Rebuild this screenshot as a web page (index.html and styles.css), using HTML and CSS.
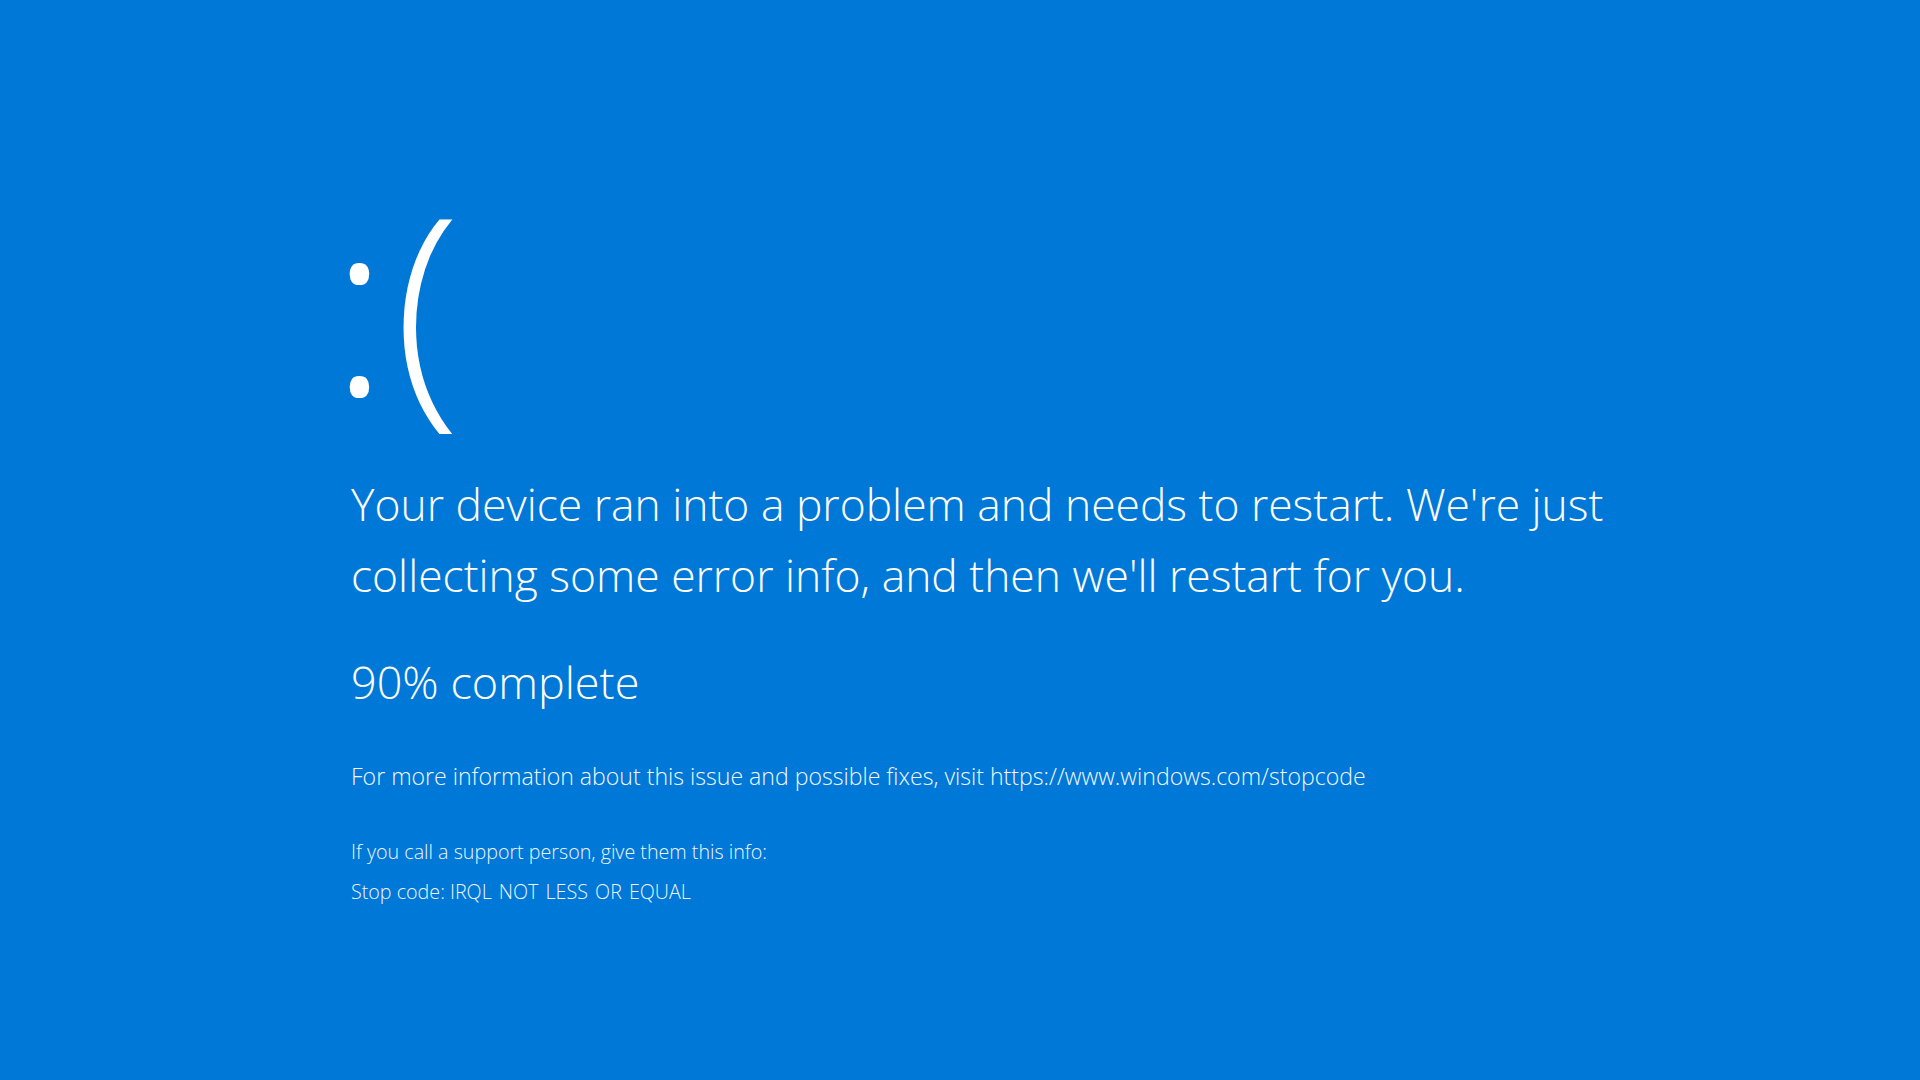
FILE: index.html
```html
<!DOCTYPE html>
<html lang="en">
<head>
<meta charset="utf-8">
<title>Blue screen</title>
<link rel="stylesheet" href="styles.css">
</head>
<body>
<main class="screen">
  <div class="face">:(</div>
  <p class="message">Your device ran into a problem and needs to restart. We're just<br>collecting some error info, and then we'll restart for you.</p>
  <p class="progress">90% complete</p>
  <p class="info">For more information about this issue and possible fixes, visit https://www.windows.com/stopcode</p>
  <p class="support">If you call a support person, give them this info:</p>
  <p class="support stop">Stop code: <span class="code">IRQL NOT LESS OR EQUAL</span></p>
</main>
</body>
</html>
```
FILE: styles.css
```css
html, body {
  margin: 0;
  padding: 0;
  width: 1920px;
  height: 1080px;
  background: #0078d7;
  overflow: hidden;
}
.screen {
  box-sizing: border-box;
  width: 1920px;
  height: 1080px;
  padding: 150px 0 0 351px;
  color: #ffffff;
  font-family: "Open Sans", "Noto Sans", sans-serif;
  font-weight: 300;
  display: flex;
  flex-direction: column;
  align-items: flex-start;
}
.face {
  font-size: 246px;
  line-height: 300px;
  height: 300px;
  margin-left: -21px;
  letter-spacing: 5px;
}
.message {
  margin: 19px 0 0 0;
  font-size: 44.4px;
  line-height: 71px;
}
.progress {
  margin: 41px 0 0 0;
  font-size: 45px;
  line-height: 60px;
}
.info {
  margin: 49px 0 0 0;
  font-size: 23.1px;
  line-height: 30px;
  color: #f2f7fc;
}
.support {
  margin: 48px 0 0 0;
  font-size: 19.7px;
  line-height: 26px;
  color: #eef5fc;
}
.support.stop {
  margin-top: 14px;
}
.code {
  word-spacing: 2px;
}
```
